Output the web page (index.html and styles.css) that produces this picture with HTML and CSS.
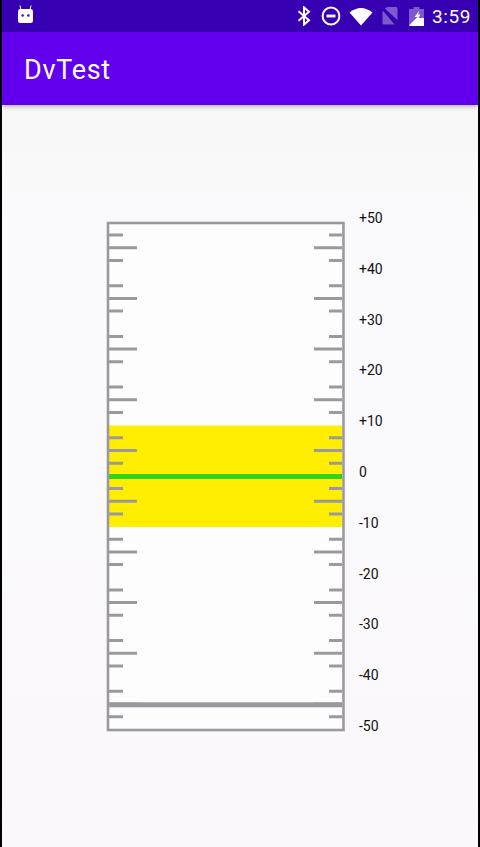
FILE: index.html
```html
<!DOCTYPE html>
<html lang="en">
<head>
    <meta charset="UTF-8">
    <meta name="viewport" content="width=device-width, initial-scale=1.0">
    <title>DvTest</title>
    <link rel="stylesheet" href="styles.css">
</head>
<body>

    <!-- Status bar -->
    <div class="status-bar">
        <svg class="icon-android" width="18" height="19" viewBox="0 0 18 19">
            <path class="icon-line" d="M4 5 L3 0.5 M13 5 L14 0.5"/>
            <path class="icon-white" d="M3 4 H14 Q16 4 16 6.5 V15.5 Q16 18 13.5 18 H3.5 Q1 18 1 15.5 V6.5 Q1 4 3 4 Z"/>
            <circle class="icon-eye" cx="5.6" cy="10.5" r="1.2"/>
            <circle class="icon-eye" cx="11.4" cy="10.5" r="1.2"/>
        </svg>
        <div class="status-icons">
            <svg class="icon-bluetooth" width="14" height="20" viewBox="0 0 14 20">
                <path d="M1.5 5.2 L12 14.2 L7 18.6 V1.4 L12 5.8 L1.5 14.8"/>
            </svg>
            <svg class="icon-dnd" width="20" height="20" viewBox="0 0 20 20">
                <circle class="dnd-ring" cx="10" cy="10" r="8.4"/>
                <rect class="icon-white" x="5.5" y="8.6" width="9" height="2.8"/>
            </svg>
            <svg class="icon-wifi" width="24" height="19" viewBox="0 0 24 19">
                <path class="icon-white" d="M0.5 5.5 Q12 -3.5 23.5 5.5 L12 18.5 Z"/>
            </svg>
            <svg class="icon-sim" width="16" height="18" viewBox="0 0 16 18">
                <path class="icon-faded" d="M5 0 H14 Q15.5 0 15.5 1.5 V13 L3 1.8 Z M1.2 4 L12.5 17.5 H2 Q0.5 17.5 0.5 16 V5 Z"/>
                <path class="sim-slash" d="M0.5 0.5 L15.5 17.5"/>
            </svg>
            <svg class="icon-battery" width="15" height="19" viewBox="0 0 15 19">
                <path class="icon-faded" d="M4.5 0 H10.5 V2 H15 V11 H8 L0 19 V2 H4.5 Z"/>
                <path class="icon-white" d="M0 19 V18.4 L7.4 11 H15 V19 Z"/>
                <path class="icon-white" d="M10.5 3.5 L5.5 10 H8.5 L7.6 11 H9.6 L11.2 7.6 H9 Z"/>
            </svg>
            <span class="status-time">3:59</span>
        </div>
    </div>

    <!-- App bar -->
    <header class="app-bar">
        <h1>DvTest</h1>
    </header>

    <!-- Scale -->
    <main class="content">
        <svg class="scale" width="240" height="512" viewBox="0 0 240 512">
            <defs>
                <g id="tickGroup">
                    <path d="M3 -12.7 H17 M3 0 H31 M3 12.7 H17"/>
                    <path d="M236 -12.7 H223 M236 0 H208 M236 12.7 H223"/>
                </g>
            </defs>
            <rect class="scale-face" x="2" y="2" width="235.5" height="507"/>
            <rect class="scale-band" x="3" y="204.5" width="233" height="101.5"/>
            <g class="scale-ticks">
                <use href="#tickGroup" y="26.7"/>
                <use href="#tickGroup" y="77.4"/>
                <use href="#tickGroup" y="128.1"/>
                <use href="#tickGroup" y="178.8"/>
                <use href="#tickGroup" y="229.5"/>
                <use href="#tickGroup" y="280.2"/>
                <use href="#tickGroup" y="330.9"/>
                <use href="#tickGroup" y="381.6"/>
                <use href="#tickGroup" y="432.3"/>
                <use href="#tickGroup" y="483"/>
            </g>
            <rect class="scale-level" x="3" y="253" width="233" height="5"/>
            <rect class="scale-marker" x="3" y="481.3" width="233" height="5"/>
            <rect class="scale-frame" x="2" y="2" width="235.5" height="507"/>
        </svg>
        <div class="scale-labels">
            <span>+50</span>
            <span>+40</span>
            <span>+30</span>
            <span>+20</span>
            <span>+10</span>
            <span>0</span>
            <span>-10</span>
            <span>-20</span>
            <span>-30</span>
            <span>-40</span>
            <span>-50</span>
        </div>
    </main>

</body>
</html>
```

FILE: styles.css
```css
/* General Reset */
* {
    margin: 0;
    padding: 0;
    box-sizing: border-box;
    font-family: Roboto, "Liberation Sans", sans-serif;
}

/* The capture has a thin black edge on both sides */
html {
    height: 100%;
}

body {
    display: flex;
    flex-direction: column;
    height: 100%;
    border-left: 2px solid #000;
    border-right: 2px solid #000;
    background: linear-gradient(#f6f6f6, #fbfafc 30%, #faf8fb);
    overflow: hidden;
}

/* Status bar */
.status-bar {
    display: flex;
    align-items: center;
    justify-content: space-between;
    height: 32px;
    padding: 0 6px 0 15px;
    background-color: #3700b3;
    color: #fff;
}

.status-icons {
    display: flex;
    align-items: center;
}

.icon-android {
    margin-bottom: 3px;
}

.icon-white {
    fill: #fff;
}

.icon-faded {
    fill: #fff;
    opacity: 0.35;
}

.icon-line {
    fill: none;
    stroke: #fff;
    stroke-width: 1;
}

.icon-eye {
    fill: #3700b3;
}

.icon-bluetooth {
    margin-right: 10px;
}

.icon-bluetooth path {
    fill: none;
    stroke: #fff;
    stroke-width: 2;
}

.icon-dnd {
    margin-right: 8px;
}

.dnd-ring {
    fill: none;
    stroke: #fff;
    stroke-width: 2;
}

.icon-wifi {
    margin-right: 9px;
}

.icon-sim {
    margin-right: 11px;
}

.sim-slash {
    fill: none;
    stroke: #3700b3;
    stroke-width: 1.2;
}

.icon-battery {
    margin-right: 8px;
}

.status-time {
    width: 40px;
    font-size: 19px;
    letter-spacing: 0.6px;
    white-space: nowrap;
}

/* App bar */
.app-bar {
    position: relative;
    display: flex;
    align-items: center;
    height: 73px;
    padding: 3px 0 0 22px;
    background-color: #6200ee;
    box-shadow: 0 2px 4px rgba(0, 0, 0, 0.25);
}

.app-bar h1 {
    font-size: 27px;
    font-weight: 400;
    letter-spacing: 0.7px;
    color: #fff;
}

/* Scale */
.content {
    display: flex;
    align-items: flex-start;
    padding: 103px 0 0 104px;
}

.scale {
    display: block;
    margin-top: 13px;
}

.scale-face {
    fill: #fefdfe;
}

.scale-band {
    fill: #ffee00;
}

.scale-ticks {
    fill: none;
    stroke: #9b999d;
    stroke-width: 3;
}

.scale-level {
    fill: #2ed416;
}

.scale-marker {
    fill: #9b999d;
}

.scale-frame {
    fill: none;
    stroke: #9b999d;
    stroke-width: 2.6;
}

.scale-labels {
    display: flex;
    flex-direction: column;
    justify-content: space-between;
    height: 528px;
    margin-left: 13px;
    font-family: "Liberation Sans", Arial, sans-serif;
    font-size: 14px;
    line-height: 20px;
    color: #111;
}
```
